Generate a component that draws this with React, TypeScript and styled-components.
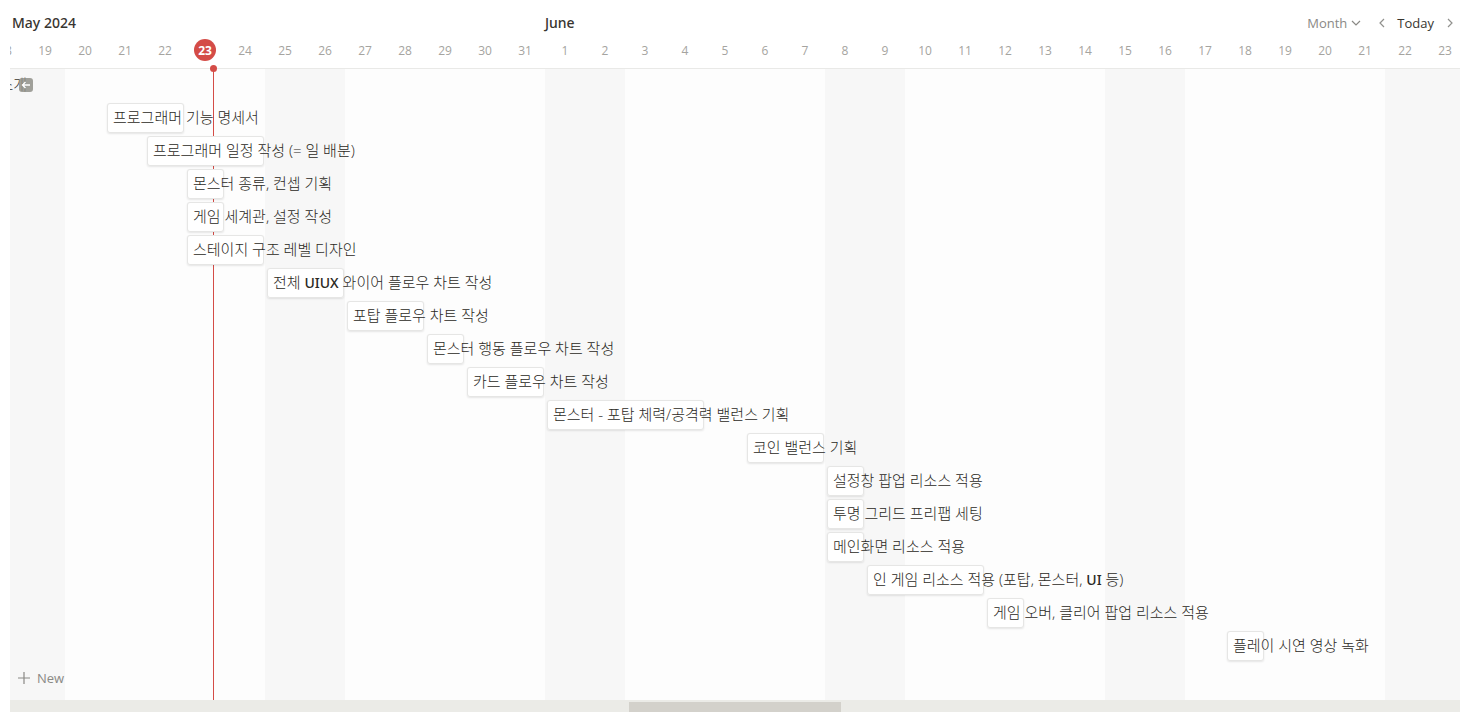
import React from "react";
import styled, { createGlobalStyle } from "styled-components";

const DAY = 40;
const FIRST_DAY = 18; // May 18 is the first (partly scrolled) column
const DAY_COUNT = 37;
const TODAY = 5;
const LEAD = 25;

const GlobalStyle = createGlobalStyle`
  *, *::before, *::after { box-sizing: border-box; }
  body {
    margin: 0;
    background: #ffffff;
    color: #37352f;
    font-family: "Open Sans", "Noto Sans CJK KR", sans-serif;
    font-size: 13px;
  }
  button { font: inherit; color: inherit; border: 0; padding: 0; background: none; cursor: pointer; }
`;

const Timeline = styled.main`
  margin: 0 9px 5px 10px;
  overflow: hidden;
`;

const TopBar = styled.header`
  display: flex;
  align-items: center;
  justify-content: space-between;
  height: 36px;
  padding-top: 10px;
`;

const Months = styled.div`
  display: grid;
  grid-template-columns: repeat(${DAY_COUNT}, ${DAY}px);
  width: 0;
  margin-left: -${LEAD}px;
  white-space: nowrap;
`;

const MonthName = styled.h2<{ $start: number; $indent?: number }>`
  grid-row: 1;
  grid-column: ${(p) => p.$start + 1} / span 4;
  margin: 0;
  padding-left: ${(p) => p.$indent ?? 0}px;
  font-family: "Noto Sans", sans-serif;
  font-size: 14px;
  line-height: 26px;
  font-weight: 500;
`;

const Controls = styled.nav`
  display: flex;
  align-items: center;
  gap: 12px;
  padding-right: 4px;
  line-height: 26px;
`;

const ScaleButton = styled.button`
  display: flex;
  align-items: center;
  gap: 4px;
  color: #8a8985;
`;

const StepButton = styled.button`
  display: flex;
  align-items: center;
  color: #91918e;
`;

const DayRow = styled.div`
  display: grid;
  grid-template-columns: repeat(${DAY_COUNT}, ${DAY}px);
  align-items: center;
  height: 33px;
  margin-left: -${LEAD}px;
  padding-bottom: 4px;
  border-bottom: 1px solid #e9e9e7;
`;

const DayLabel = styled.span<{ $today?: boolean }>`
  justify-self: center;
  width: 22px;
  height: 22px;
  border-radius: 11px;
  font-size: 12px;
  line-height: 24px;
  text-align: center;
  color: ${(p) => (p.$today ? "#ffffff" : "#a5a4a0")};
  background: ${(p) => (p.$today ? "#d44c47" : "transparent")};
  font-weight: ${(p) => (p.$today ? 700 : 400)};
`;

const Board = styled.section`
  position: relative;
  display: grid;
`;

const Stripes = styled.div`
  grid-area: 1 / 1;
  display: grid;
  grid-template-columns: repeat(${DAY_COUNT}, ${DAY}px);
  width: 0;
  margin-left: -${LEAD}px;
`;

const Stripe = styled.div<{ $weekend: boolean }>`
  background: ${(p) => (p.$weekend ? "#f7f7f7" : "#fdfdfd")};
`;

const NowLine = styled.div`
  position: absolute;
  top: 0;
  bottom: 0;
  left: ${TODAY * DAY - LEAD + 28}px;
  width: 1px;
  background: #d44c47;
`;

const NowDot = styled.div`
  position: absolute;
  z-index: 2;
  top: -4px;
  left: ${TODAY * DAY - LEAD + 25}px;
  width: 7px;
  height: 7px;
  border-radius: 50%;
  background: #d44c47;
`;

const Rows = styled.div`
  grid-area: 1 / 1;
  position: relative;
  display: flex;
  flex-direction: column;
  gap: 3px;
  padding: 1px 0 6px;
`;

const Row = styled.div`
  display: grid;
  grid-template-columns: repeat(${DAY_COUNT}, ${DAY}px);
  width: 0;
  height: 30px;
  margin-left: -${LEAD}px;
`;

const Card = styled.button<{ $start: number; $span: number }>`
  grid-column: ${(p) => p.$start + 1} / span ${(p) => p.$span};
  margin: 0 1px 0 2px;
  padding: 0 0 2px 6px;
  border-radius: 3px;
  background: #ffffff;
  box-shadow: inset 0 0 0 1px #e6e6e5, 0 1px 2px rgba(15, 15, 15, 0.1);
  color: #2b2924;
  font-size: 15px;
  font-weight: 300;
  line-height: 28px;
  text-align: left;
  white-space: nowrap;
`;

const Acronym = styled.span`
  font-family: "Noto Sans", sans-serif;
  font-size: 14px;
  font-weight: 500;
  line-height: 20px;
`;

const OffscreenRow = styled.div`
  display: flex;
  align-items: center;
  height: 30px;
`;

const OffscreenTitle = styled.span`
  display: flex;
  justify-content: flex-end;
  width: 17px;
  margin-right: -8px;
  padding-bottom: 2px;
  font-size: 15px;
  font-weight: 300;
  line-height: 28px;
  white-space: nowrap;
`;

const JumpButton = styled.button`
  display: flex;
  align-items: center;
  justify-content: center;
  width: 14px;
  height: 14px;
  border-radius: 3px;
  background: rgba(145, 144, 138, 0.85);
  color: #ffffff;
`;

const NewButton = styled.button`
  display: flex;
  align-items: center;
  gap: 7px;
  height: 28px;
  margin-bottom: 2px;
  padding-left: 8px;
  color: #8a8985;
`;

const ScrollTrack = styled.div`
  display: flex;
  height: 12px;
  padding-top: 2px;
  background: #ebebe7;
`;

const ScrollThumb = styled.div`
  width: 14.6%;
  margin-left: 42.7%;
  background: #d3d1cb;
`;

const tasks: { title: React.ReactNode; start: number; span: number }[] = [
  { title: "프로그래머 기능 명세서", start: 3, span: 2 },
  { title: "프로그래머 일정 작성 (= 일 배분)", start: 4, span: 3 },
  { title: "몬스터 종류, 컨셉 기획", start: 5, span: 1 },
  { title: "게임 세계관, 설정 작성", start: 5, span: 1 },
  { title: "스테이지 구조 레벨 디자인", start: 5, span: 2 },
  { title: <>전체 <Acronym>UIUX</Acronym> 와이어 플로우 차트 작성</>, start: 7, span: 2 },
  { title: "포탑 플로우 차트 작성", start: 9, span: 2 },
  { title: "몬스터 행동 플로우 차트 작성", start: 11, span: 1 },
  { title: "카드 플로우 차트 작성", start: 12, span: 2 },
  { title: "몬스터 - 포탑 체력/공격력 밸런스 기획", start: 14, span: 4 },
  { title: "코인 밸런스 기획", start: 19, span: 2 },
  { title: "설정창 팝업 리소스 적용", start: 21, span: 1 },
  { title: "투명 그리드 프리팹 세팅", start: 21, span: 1 },
  { title: "메인화면 리소스 적용", start: 21, span: 1 },
  { title: <>인 게임 리소스 적용 (포탑, 몬스터, <Acronym>UI</Acronym> 등)</>, start: 22, span: 3 },
  { title: "게임 오버, 클리어 팝업 리소스 적용", start: 25, span: 1 },
  { title: "플레이 시연 영상 녹화", start: 31, span: 1 },
];

const days = Array.from({ length: DAY_COUNT }, (_, i) => ({
  index: i,
  label: ((FIRST_DAY + i - 1) % 31) + 1,
  weekend: i % 7 < 2,
}));

export default function App() {
  return (
    <>
      <GlobalStyle />
      <Timeline>
        <TopBar>
          <Months>
            <MonthName $start={0} $indent={27}>May 2024</MonthName>
            <MonthName $start={14}>June</MonthName>
          </Months>
          <Controls>
            <ScaleButton>
              Month
              <svg width="10" height="10" viewBox="0 0 10 10" fill="none" stroke="currentColor" strokeWidth="1.2">
                <path d="M1 3l4 4 4-4" />
              </svg>
            </ScaleButton>
            <StepButton aria-label="Previous">
              <svg width="12" height="10" viewBox="0 0 12 10" fill="none" stroke="currentColor" strokeWidth="1.2">
                <path d="M11 1L7 5l4 4" />
              </svg>
            </StepButton>
            <button>Today</button>
            <StepButton aria-label="Next">
              <svg width="10" height="10" viewBox="0 0 10 10" fill="none" stroke="currentColor" strokeWidth="1.2">
                <path d="M2 1l4 4-4 4" />
              </svg>
            </StepButton>
          </Controls>
        </TopBar>
        <DayRow>
          {days.map((d) => (
            <DayLabel key={d.index} $today={d.index === TODAY}>{d.label}</DayLabel>
          ))}
        </DayRow>
        <Board>
          <Stripes>
            {days.map((d) => (
              <Stripe key={d.index} $weekend={d.weekend} />
            ))}
          </Stripes>
          <NowLine />
          <Rows>
            <OffscreenRow>
              <OffscreenTitle>소개</OffscreenTitle>
              <JumpButton aria-label="Scroll to item">
                <svg width="10" height="10" viewBox="0 0 10 10" fill="none" stroke="currentColor" strokeWidth="1.4">
                  <path d="M9 5H1.5M4.5 2l-3 3 3 3" />
                </svg>
              </JumpButton>
            </OffscreenRow>
            {tasks.map((t, i) => (
              <Row key={i}>
                <Card $start={t.start} $span={t.span}>{t.title}</Card>
              </Row>
            ))}
            <NewButton>
              <svg width="12" height="12" viewBox="0 0 12 12" fill="none" stroke="currentColor" strokeWidth="1.2">
                <path d="M6 0v12M0 6h12" />
              </svg>
              New
            </NewButton>
          </Rows>
          <NowDot />
        </Board>
        <ScrollTrack>
          <ScrollThumb />
        </ScrollTrack>
      </Timeline>
    </>
  );
}
